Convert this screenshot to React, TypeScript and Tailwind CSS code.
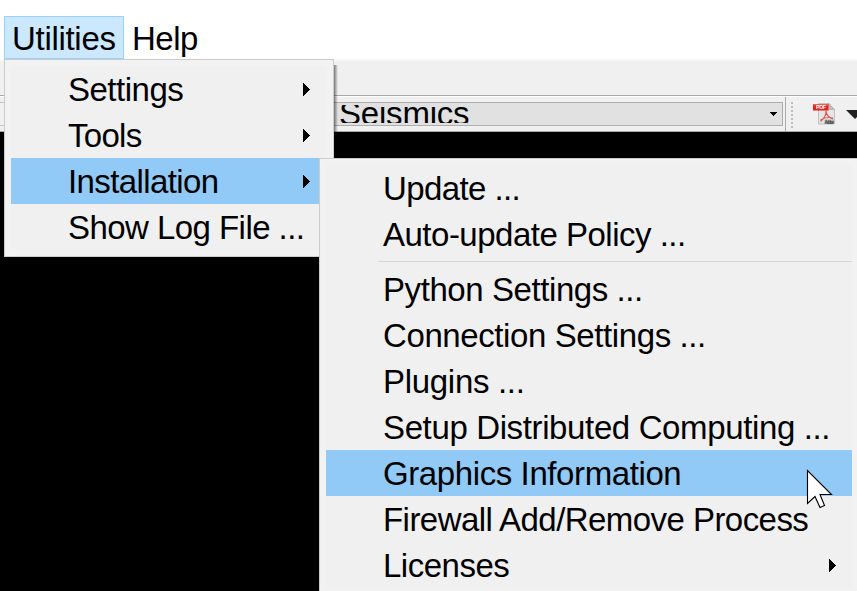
import React from "react";

type Item = { label: string; submenu?: boolean; active?: boolean; tracking: string };

const mainItems: Item[] = [
  { label: "Settings", submenu: true, tracking: "tracking-[-0.5px]" },
  { label: "Tools", submenu: true, tracking: "tracking-[-0.7px]" },
  { label: "Installation", submenu: true, active: true, tracking: "tracking-[-0.6px]" },
  { label: "Show Log File ...", tracking: "tracking-[-0.55px]" },
];

const updateItems: Item[] = [
  { label: "Update ...", tracking: "tracking-[-0.6px]" },
  { label: "Auto-update Policy ...", tracking: "tracking-[-0.5px]" },
];

const setupItems: Item[] = [
  { label: "Python Settings ...", tracking: "tracking-[-0.42px]" },
  { label: "Connection Settings ...", tracking: "tracking-[-0.4px]" },
  { label: "Plugins ...", tracking: "tracking-[-0.3px]" },
  { label: "Setup Distributed Computing ...", tracking: "tracking-[-0.37px]" },
  { label: "Graphics Information", active: true, tracking: "tracking-[-0.4px]" },
  { label: "Firewall Add/Remove Process", tracking: "tracking-[-0.55px]" },
  { label: "Licenses", submenu: true, tracking: "tracking-[-0.5px]" },
];

function Arrow() {
  return (
    <svg className="h-[13px] w-[7px] shrink-0" viewBox="0 0 7 13" shapeRendering="crispEdges">
      <path d="M0 0L7 6.5L0 13Z" fill="#000" />
    </svg>
  );
}

function MenuRow({ item, pad }: { item: Item; pad: string }) {
  return (
    <div
      className={`flex h-[46px] items-center justify-between ${pad} ${
        item.active ? "bg-[#91c9f7]" : "bg-[#f0f0f0]"
      }`}
    >
      <span className={`pt-[2px] leading-[46px] ${item.tracking}`}>{item.label}</span>
      {item.submenu && <Arrow />}
    </div>
  );
}

function PdfIcon() {
  return (
    <svg className="h-[24px] w-[23px] shrink-0" viewBox="0 0 23 24">
      <path d="M5.5 1.5h10l6 6v14.5h-16z" fill="#e6e6e6" stroke="#c2c2c2" />
      <path d="M15.500 1v6.500h6z" fill="#bdbdbd" stroke="#a0a0a0" strokeWidth=".5" />
      <rect x="11.500" y="17.500" width="9.500" height="4.500" fill="#b5b5b5" />
      <path
        d="M7.500 19.500c3-2.500 6-7 5.500-11M13 8.500c0 4 3 7.500 7 8.500M7.500 18c4-2.500 8-3 12.500-2"
        fill="none"
        stroke="#e3524d"
        strokeWidth="1.100"
      />
      <rect x="0" y="2" width="15.500" height="6.500" fill="#e3211d" />
      <rect x="0" y="2" width="15.500" height="1.500" fill="#ee5a54" />
      <text x="3" y="7.300" fontSize="5.500" fontWeight="700" fill="#fff" textLength="10">
        PDF
      </text>
      <text x="11.500" y="21.500" fontSize="4.500" fontWeight="700" fill="#444" textLength="9.500">
        Adobe
      </text>
    </svg>
  );
}

export default function App() {
  return (
    <div className="relative flex h-[591px] w-[857px] flex-col overflow-hidden bg-black font-['Liberation_Sans',Arial,sans-serif] text-[33px] whitespace-nowrap text-black">
      <nav className="flex h-[59px] shrink-0 bg-white pt-4 pl-1">
        <div className="h-[43px] w-[120px] border border-[#99d1ff] bg-[#cce8ff] pl-[7px] leading-[44px] tracking-[-0.3px]">
          Utilities
        </div>
        <div className="pl-[8px] leading-[46px] tracking-[-0.5px]">Help</div>
      </nav>
      <div className="h-[37px] shrink-0 border-t-2 border-b border-t-[#f7f7f7] border-b-[#a9a9a9] bg-[#f0f0f0]" />
      <div className="flex h-[36px] shrink-0 border-t border-b border-t-white border-b-[#a9a9a9] bg-[#f0f0f0]">
        <div className="flex w-[786px] shrink-0 border-r border-[#adadad] pt-[5px] pr-[2px]">
          <div className="h-[24px] w-[300px] border-y border-[#c4c4c4]" />
          <div className="flex h-[24px] flex-1 items-center justify-between border border-[#adadad] bg-[#e1e1e1] pr-[5px] pl-[38px]">
            <div className="h-[18px] overflow-hidden">
              <div className="-mt-[10px] leading-[38px] tracking-[-0.2px]">Seismics</div>
            </div>
            <svg className="h-[4px] w-[7px]" viewBox="0 0 7 4" shapeRendering="crispEdges">
              <path d="M0 0h7L3.500 4z" />
            </svg>
          </div>
        </div>
        <div className="flex min-w-0 flex-1 pt-[5px] pl-[5px]">
          <div className="flex w-[2px] shrink-0 flex-col gap-[2px]">
            {[0, 1, 2, 3, 4, 5, 6].map((i) => (
              <i key={i} className="block h-[2px] w-[2px] shrink-0 bg-[#bdbdbd]" />
            ))}
          </div>
          <div className="ml-[20px] shrink-0">
            <PdfIcon />
          </div>
          <svg className="mt-[8px] ml-[10px] h-[9px] w-[18px] shrink-0" viewBox="0 0 18 9">
            <path d="M0 0h18L9 9z" fill="#222" />
          </svg>
        </div>
      </div>
      <main className="flex-1 bg-black" />

      <div className="absolute top-[59px] left-[4px] h-[198px] w-[330px] border border-[#cccccc] bg-[#f2f2f2] p-[6px]">
        {mainItems.map((item) => (
          <MenuRow key={item.label} item={item} pad="pl-[57px] pr-[17px]" />
        ))}
      </div>
      <div className="absolute top-[65px] left-[334px] h-[67px] w-[4px] bg-linear-to-r from-black/50 to-transparent" />

      <div className="absolute top-[158px] left-[319px] h-[440px] w-[539px] border border-[#cccccc] bg-[#f2f2f2] py-[6px] pr-[5px] pl-[6px]">
        {updateItems.map((item) => (
          <MenuRow key={item.label} item={item} pad="pl-[57px] pr-[16px]" />
        ))}
        <div className="h-[9px] bg-[#f0f0f0] pt-[4px] pl-[52px]">
          <div className="h-px bg-[#d7d7d7]" />
        </div>
        {setupItems.map((item) => (
          <MenuRow key={item.label} item={item} pad="pl-[57px] pr-[16px]" />
        ))}
      </div>

      <svg className="absolute top-[469px] left-[806px] h-[42px] w-[28px]" viewBox="0 0 28 42">
        <path
          d="M1.500 1.500V34.500L9 27.500L14 38.500L18.500 36.500L14 25.500H25.500Z"
          fill="#fff"
          stroke="#000"
          strokeWidth="1.100"
        />
      </svg>
    </div>
  );
}
